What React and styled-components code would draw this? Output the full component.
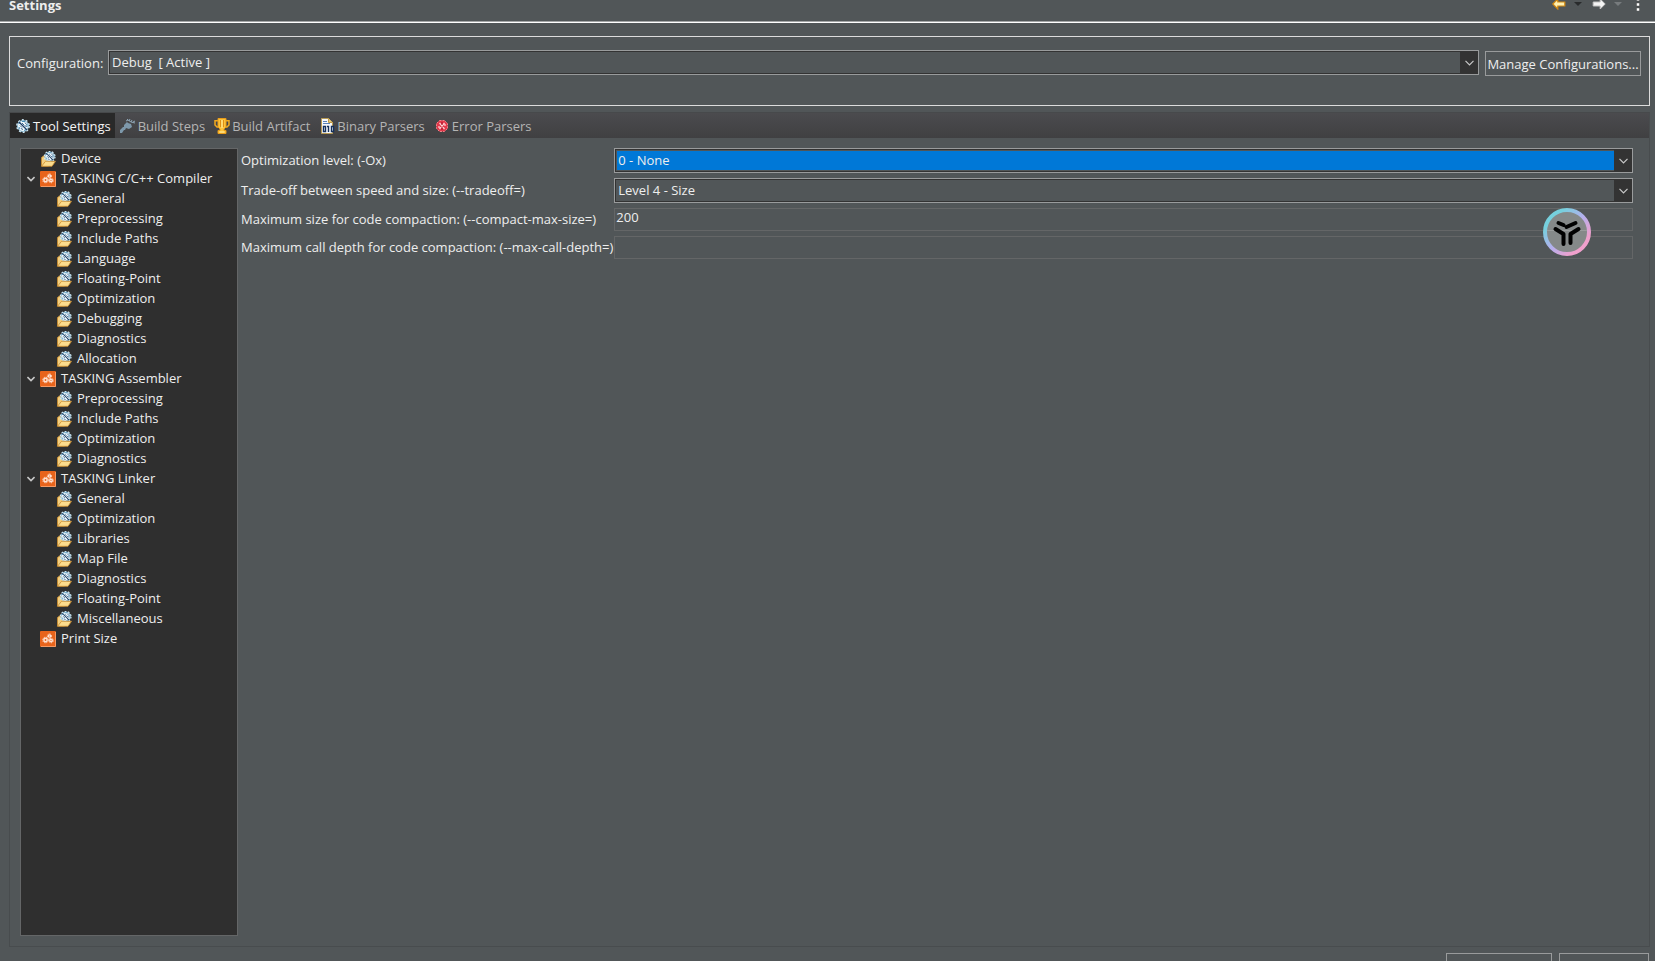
import React, { useState } from 'react' ;
import styled, { createGlobalStyle } from 'styled-components' ;

const GlobalStyle = createGlobalStyle`
    * {
        box-sizing : border-box ;
    }

    body {
        margin : 0 ;
        overflow : hidden ;
        background : #515658 ;
    }

    body, button, input, select {
        font-family : "Open Sans", "Noto Sans", sans-serif ;
        font-size : 13px ;
        line-height : 18px ;
        color : #eeeeee ;
    }
`;

const Page = styled.div`
    display : flex ;
    flex-direction : column ;
    height : calc(100vh + 17px) ;
`;

const Header = styled.header`
    display : flex ;
    justify-content : space-between ;
    height : 23px ;
    padding : 0 8px 0 9px ;
    border-bottom : 1px solid #ffffff ;
    box-shadow : inset 0 -1px 0 #a4a6a7 ;
`;

const Title = styled.h1`
    margin : -4px 0 0 ;
    font-size : 13px ;
    font-weight : 700 ;
`;

const HeaderTools = styled.div`
    display : flex ;
    align-items : flex-start ;
    height : 12px ;
    overflow : hidden ;
`;

const ToolButton = styled.button`
    display : flex ;
    width : ${props => props.$width}px ;
    padding : 0 ;
    border : 0 ;
    background : none ;
`;

const ConfigBox = styled.section`
    display : flex ;
    align-items : flex-start ;
    gap : 6px ;
    height : 70px ;
    margin : 13px 5px 6px 9px ;
    padding : 13px 8px 0 7px ;
    border : 1px solid #dcdcdc ;
`;

const ConfigLabel = styled.label`
    width : 85px ;
    padding-top : 4px ;
    white-space : nowrap ;
`;

const PushButton = styled.button`
    min-width : ${props => props.$width}px ;
    height : 25px ;
    padding : 0 1px ;
    border : 1px solid #999b9c ;
    background : #515658 ;
    white-space : nowrap ;
`;

const ConfigButton = styled(PushButton)`
    margin-top : 1px ;
`;

const ComboBox = styled.div`
    position : relative ;
    flex : 1 ;
    height : 25px ;
    padding : 1px ;
    border : 1px solid #999b9c ;
    background : #333333 ;
`;

const ComboSelect = styled.select`
    display : block ;
    width : 100% ;
    height : 21px ;
    padding : 0 20px 2px 2px ;
    border : 0 ;
    border-radius : 0 ;
    outline : 0 ;
    appearance : none ;
    background : ${props => props.$active ? '#0078d7' : '#515658'} ;
    box-shadow : inset 0 0 0 1px #515658 ;
`;

const ComboArrow = styled.span`
    position : absolute ;
    top : 0 ;
    right : 0 ;
    bottom : 0 ;
    display : flex ;
    align-items : center ;
    justify-content : center ;
    width : 18px ;
    background : #333333 ;
    pointer-events : none ;
`;

const Folder = styled.section`
    display : flex ;
    flex : 1 ;
    flex-direction : column ;
    margin : 0 5px 6px 9px ;
    border : 1px solid #484c4e ;
    border-top-color : #47494b ;
`;

const TabBar = styled.div`
    display : flex ;
    height : 25px ;
    background : linear-gradient(#4b4b4e, #404042) ;
`;

const Tab = styled.button`
    display : flex ;
    align-items : center ;
    gap : 2px ;
    padding : 0 4px 0 5px ;
    border : 0 ;
    background : ${props => props.$active ? '#292929' : 'none'} ;
    color : ${props => props.$active ? '#f4f4f4' : '#b4b4b4'} ;
    white-space : nowrap ;
`;

const FolderBody = styled.div`
    display : flex ;
    flex : 1 ;
    gap : 3px ;
    padding : 10px 16px 10px 10px ;
`;

const Tree = styled.ul`
    width : 218px ;
    margin : 0 ;
    padding : 0 ;
    border : 1px solid #646667 ;
    background : #2f2f2f ;
    list-style : none ;
`;

const Branch = styled.ul`
    margin : 0 ;
    padding : 0 ;
    list-style : none ;
`;

const TreeRow = styled.div`
    display : flex ;
    align-items : center ;
    gap : 5px ;
    height : 20px ;
    padding-left : ${props => props.$depth ? 35 : 19}px ;
    white-space : nowrap ;
`;

const GroupRow = styled(TreeRow)`
    padding-left : 6px ;
`;

const TreeText = styled.span`
    padding-bottom : 2px ;
`;

const Twisty = styled.button`
    display : flex ;
    width : 8px ;
    padding : 0 ;
    border : 0 ;
    background : none ;
`;

const Form = styled.div`
    display : grid ;
    flex : 1 ;
    grid-template-columns : minmax(372px, max-content) 1fr ;
    align-content : start ;
    gap : 5px 1px ;
`;

const FieldLabel = styled.label`
    align-self : center ;
    padding-bottom : 1px ;
    white-space : nowrap ;
`;

const TextField = styled.input`
    width : 100% ;
    height : 23px ;
    padding : 0 1px 5px ;
    border : 1px solid #646667 ;
    outline : 0 ;
    background : #515658 ;
`;

const Footer = styled.footer`
    display : flex ;
    justify-content : flex-end ;
    gap : 7px ;
    padding : 0 6px 0 0 ;
`;

const FloatingBadge = styled.button`
    position : fixed ;
    top : 208px ;
    right : 64px ;
    width : 48px ;
    height : 48px ;
    padding : 0 ;
    border : 0 ;
    background : none ;
`;

const Gear = () => (
    <>
        <circle cx="8" cy="8" r="5.500" fill="#f2fafd" stroke="#7fb4d2" />
        <circle cx="8" cy="8" r="6.200" fill="none" stroke="#cfe8f4" strokeWidth="1.400" strokeDasharray="2 1.900" />
        <path d="M4 6l1-2M7 3.500h3M12 6v3M11 11.500l-2 1M5 11l-1-2" fill="none" stroke="#4b8fb8" />
        <path d="M4 4l8 8" stroke="#1f3f66" strokeWidth="1.200" />
        <path d="M7 5l2 2M10 4.500l1.500 2M9.500 7.500l2 1M5 7.500l2 2M6 10.500l2 1" fill="none" stroke="#2a5580" strokeWidth=".9" />
    </>
) ;

const GearIcon = () => (
    <svg width="16" height="16" viewBox="0 0 16 16"><Gear /></svg>
) ;

const HammerIcon = () => (
    <svg width="16" height="16" viewBox="0 0 16 16">
        <path d="M0 14v-2l3-3h1V7l3-3 1 1 3 1 1 3-3 2-3-1-1 2H4l-2 3H0z" fill="#7d98ab" />
        <path d="M6 3l2-1 3 2 4 1M7 2l1-1M9 3l1-2M11 4l1-2M13 4l2-1" fill="none" stroke="#8fa6b6" />
    </svg>
) ;

const TrophyIcon = () => (
    <svg width="16" height="16" viewBox="0 0 16 16">
        <path d="M4 2.700H1V7l2 2h2M12 2.700h3V7l-2 2h-2" fill="none" stroke="#f2a91e" strokeWidth="1.500" />
        <path d="M4 .5h8V9l-2 2v1.500h2v3H4v-3h2V11L4 9z" fill="#fbc23c" stroke="#e89b17" />
        <path d="M6.500 2v7M9.500 2v7" stroke="#e08d12" />
        <path d="M8 2v8M5.500 14h5" stroke="#fff0a8" />
    </svg>
) ;

const BinaryIcon = () => (
    <svg width="16" height="16" viewBox="0 0 16 16">
        <path d="M2.500 .5h7l4 4v11h-11z" fill="#f6f8fb" stroke="#b79a55" />
        <path d="M9.500 .5v4h4" fill="#e5c978" stroke="#c09a45" />
        <path d="M4 3.500h4M4 5.500h7" stroke="#5a82b8" />
        <path d="M4.500 8.500h2v5h-2zM8 8.500h1.500V14M12.500 8.500h2v5h-2z" fill="#fff" stroke="#14305c" strokeWidth="1.400" />
    </svg>
) ;

const ErrorIcon = () => (
    <svg width="16" height="16" viewBox="0 0 16 16">
        <path d="M5.500 2.500h5l3 3v5l-3 3h-5l-3-3v-5z" fill="#e2384a" stroke="#f08088" strokeDasharray="2 1" />
        <path d="M5.500 5l5 6M10.500 5l-5 6M5 8v2M11 6v2" stroke="#ffd2d5" strokeWidth="1.200" />
        <path d="M8 4v3M8 9v3" stroke="#a01227" />
    </svg>
) ;

const OptionIcon = () => (
    <svg width="16" height="16" viewBox="-1 0 16 16">
        <path d="M.5 6.500l2-1.500h3l2 3v7h-7z" fill="#f3cf80" stroke="#c08a35" />
        <g transform="translate(1.800 -1.200) scale(.86)"><Gear /></g>
        <path d="M.5 15.300l4-5h10l-3.500 5z" fill="#fbdc8d" stroke="#c98d31" strokeWidth=".8" />
    </svg>
) ;

const ToolIcon = () => (
    <svg width="16" height="16" viewBox="0 0 16 16">
        <rect width="16" height="16" rx="1" fill="#e8641b" />
        <path d="M15.500 1v14.500H1" fill="none" stroke="#f79a64" />
        <g fill="#ffe3d4">
            <circle cx="5.500" cy="9" r="2.400" />
            <circle cx="9.500" cy="5" r="1.800" />
            <circle cx="11" cy="9.500" r="2" />
        </g>
        <g fill="none" stroke="#ffe3d4" strokeDasharray="1.200 1">
            <circle cx="5.500" cy="9" r="2.800" />
            <circle cx="9.500" cy="5" r="2.100" />
            <circle cx="11" cy="9.500" r="2.300" />
        </g>
        <g fill="#e8641b">
            <circle cx="5.500" cy="9" r=".9" />
            <circle cx="9.500" cy="5" r=".5" />
            <circle cx="11" cy="9.500" r=".6" />
        </g>
    </svg>
) ;

const Chevron = ({ width = 9, color = '#c8c8c8', weight = 1.2 }) => (
    <svg width={width} height="6" viewBox="0 0 9 6">
        <path d="M.5 .8l4 4 4-4" fill="none" stroke={color} strokeWidth={weight} />
    </svg>
) ;

const tabs = [
    { name : 'Tool Settings', Icon : GearIcon },
    { name : 'Build Steps', Icon : HammerIcon },
    { name : 'Build Artifact', Icon : TrophyIcon },
    { name : 'Binary Parsers', Icon : BinaryIcon },
    { name : 'Error Parsers', Icon : ErrorIcon }
] ;

const tools = [
    { name : 'Device', leaf : true },
    {
        name : 'TASKING C/C++ Compiler',
        options : [
            'General', 'Preprocessing', 'Include Paths', 'Language', 'Floating-Point',
            'Optimization', 'Debugging', 'Diagnostics', 'Allocation'
        ]
    },
    {
        name : 'TASKING Assembler',
        options : ['Preprocessing', 'Include Paths', 'Optimization', 'Diagnostics']
    },
    {
        name : 'TASKING Linker',
        options : [
            'General', 'Optimization', 'Libraries', 'Map File', 'Diagnostics',
            'Floating-Point', 'Miscellaneous'
        ]
    },
    { name : 'Print Size' }
] ;

const Combo = ({ id, options, active }) => (
    <ComboBox>
        <ComboSelect id={id} $active={active}>
            { options.map(option => <option key={option}>{ option }</option>) }
        </ComboSelect>
        <ComboArrow><Chevron /></ComboArrow>
    </ComboBox>
) ;

const ToolNode = ({ tool }) => {
    const [open, setOpen] = useState(true) ;

    if(!tool.options) {
        return (
            <li>
                <TreeRow>
                    { tool.leaf ? <OptionIcon /> : <ToolIcon /> }
                    <TreeText>{ tool.name }</TreeText>
                </TreeRow>
            </li>
        ) ;
    }

    return (
        <li>
            <GroupRow>
                <Twisty aria-label={tool.name} aria-expanded={open} onClick={() => setOpen(!open)}>
                    <Chevron weight={1.8} />
                </Twisty>
                <ToolIcon />
                <TreeText>{ tool.name }</TreeText>
            </GroupRow>
            { open && (
                <Branch>
                    { tool.options.map(option => (
                        <li key={option}>
                            <TreeRow $depth={1}>
                                <OptionIcon />
                                <TreeText>{ option }</TreeText>
                            </TreeRow>
                        </li>
                    ))}
                </Branch>
            )}
        </li>
    ) ;
} ;

const App = () => {
    const [tab, setTab] = useState(0) ;

    return (
        <>
            <GlobalStyle />
            <Page>
                <Header>
                    <Title>Settings</Title>
                    <HeaderTools>
                        <ToolButton $width={22} aria-label="Back">
                            <svg width="14" height="10" viewBox="0 0 14 10">
                                <path d="M.8 4l5-5v3h7v4h-7v3z" fill="#fff0b0" stroke="#d48a13" strokeWidth="1.2" />
                            </svg>
                        </ToolButton>
                        <ToolButton $width={18} aria-label="Back history">
                            <svg width="8" height="10" viewBox="0 0 8 10"><path d="M0 2h8L4 6z" fill="#292b2c" /></svg>
                        </ToolButton>
                        <ToolButton $width={22} aria-label="Forward">
                            <svg width="14" height="10" viewBox="0 0 14 10">
                                <path d="M13.200 4l-5-5v3h-7v4h7v3z" fill="#f4f4f4" stroke="#c4c4c4" />
                            </svg>
                        </ToolButton>
                        <ToolButton $width={22} aria-label="Forward history">
                            <svg width="8" height="10" viewBox="0 0 8 10"><path d="M0 2h8L4 6z" fill="#777b7d" /></svg>
                        </ToolButton>
                        <ToolButton $width={11} aria-label="View menu">
                            <svg width="4" height="11" viewBox="0 0 4 11">
                                <path d="M.5 0h3v1h-3zM.5 3h3v3h-3zM.5 8h3v3h-3z" fill="#fff" stroke="#333" strokeWidth=".4" />
                            </svg>
                        </ToolButton>
                    </HeaderTools>
                </Header>
                <ConfigBox>
                    <ConfigLabel htmlFor="configuration">Configuration:</ConfigLabel>
                    <Combo id="configuration" options={['Debug\u00a0 [ Active ]']} />
                    <ConfigButton $width={156}>Manage Configurations...</ConfigButton>
                </ConfigBox>
                <Folder>
                    <TabBar>
                        { tabs.map(({ name, Icon }, index) => (
                            <Tab key={name} $active={tab === index} onClick={() => setTab(index)}>
                                <Icon />
                                { name }
                            </Tab>
                        ))}
                    </TabBar>
                    <FolderBody>
                        <Tree>
                            { tools.map(tool => <ToolNode key={tool.name} tool={tool} />) }
                        </Tree>
                        <Form>
                            <FieldLabel htmlFor="level">Optimization level: (-Ox)</FieldLabel>
                            <Combo id="level" options={['0 - None']} active />
                            <FieldLabel htmlFor="tradeoff">Trade-off between speed and size: (--tradeoff=)</FieldLabel>
                            <Combo id="tradeoff" options={['Level 4 - Size']} />
                            <FieldLabel htmlFor="compact">Maximum size for code compaction: (--compact-max-size=)</FieldLabel>
                            <TextField id="compact" defaultValue="200" />
                            <FieldLabel htmlFor="depth">Maximum call depth for code compaction: (--max-call-depth=)</FieldLabel>
                            <TextField id="depth" />
                        </Form>
                    </FolderBody>
                </Folder>
                <Footer>
                    <PushButton $width={106}>Restore Defaults</PushButton>
                    <PushButton $width={90}>Apply</PushButton>
                </Footer>
            </Page>
            <FloatingBadge aria-label="Assistant">
                <svg width="48" height="48" viewBox="0 0 48 48">
                    <defs>
                        <linearGradient id="ring" x1="0" y1="0" x2="1" y2="1">
                            <stop offset=".2" stopColor="#76d0dd" />
                            <stop offset=".5" stopColor="#b3b0ee" />
                            <stop offset=".8" stopColor="#f0a0cc" />
                        </linearGradient>
                    </defs>
                    <circle cx="24" cy="24" r="22" fill="#858989" stroke="url(#ring)" strokeWidth="4" />
                    <path d="M4 22.500h40" stroke="#9a9d9d" />
                    <g fill="none" stroke="#000" strokeWidth="4" strokeLinecap="round" strokeLinejoin="round">
                        <path d="M15.500 15l5 2M23.500 19l9-4" />
                        <path d="M12.500 21l8 5v10M35.500 21l-8 5v9" />
                    </g>
                </svg>
            </FloatingBadge>
        </>
    ) ;
} ;

export default App ;
